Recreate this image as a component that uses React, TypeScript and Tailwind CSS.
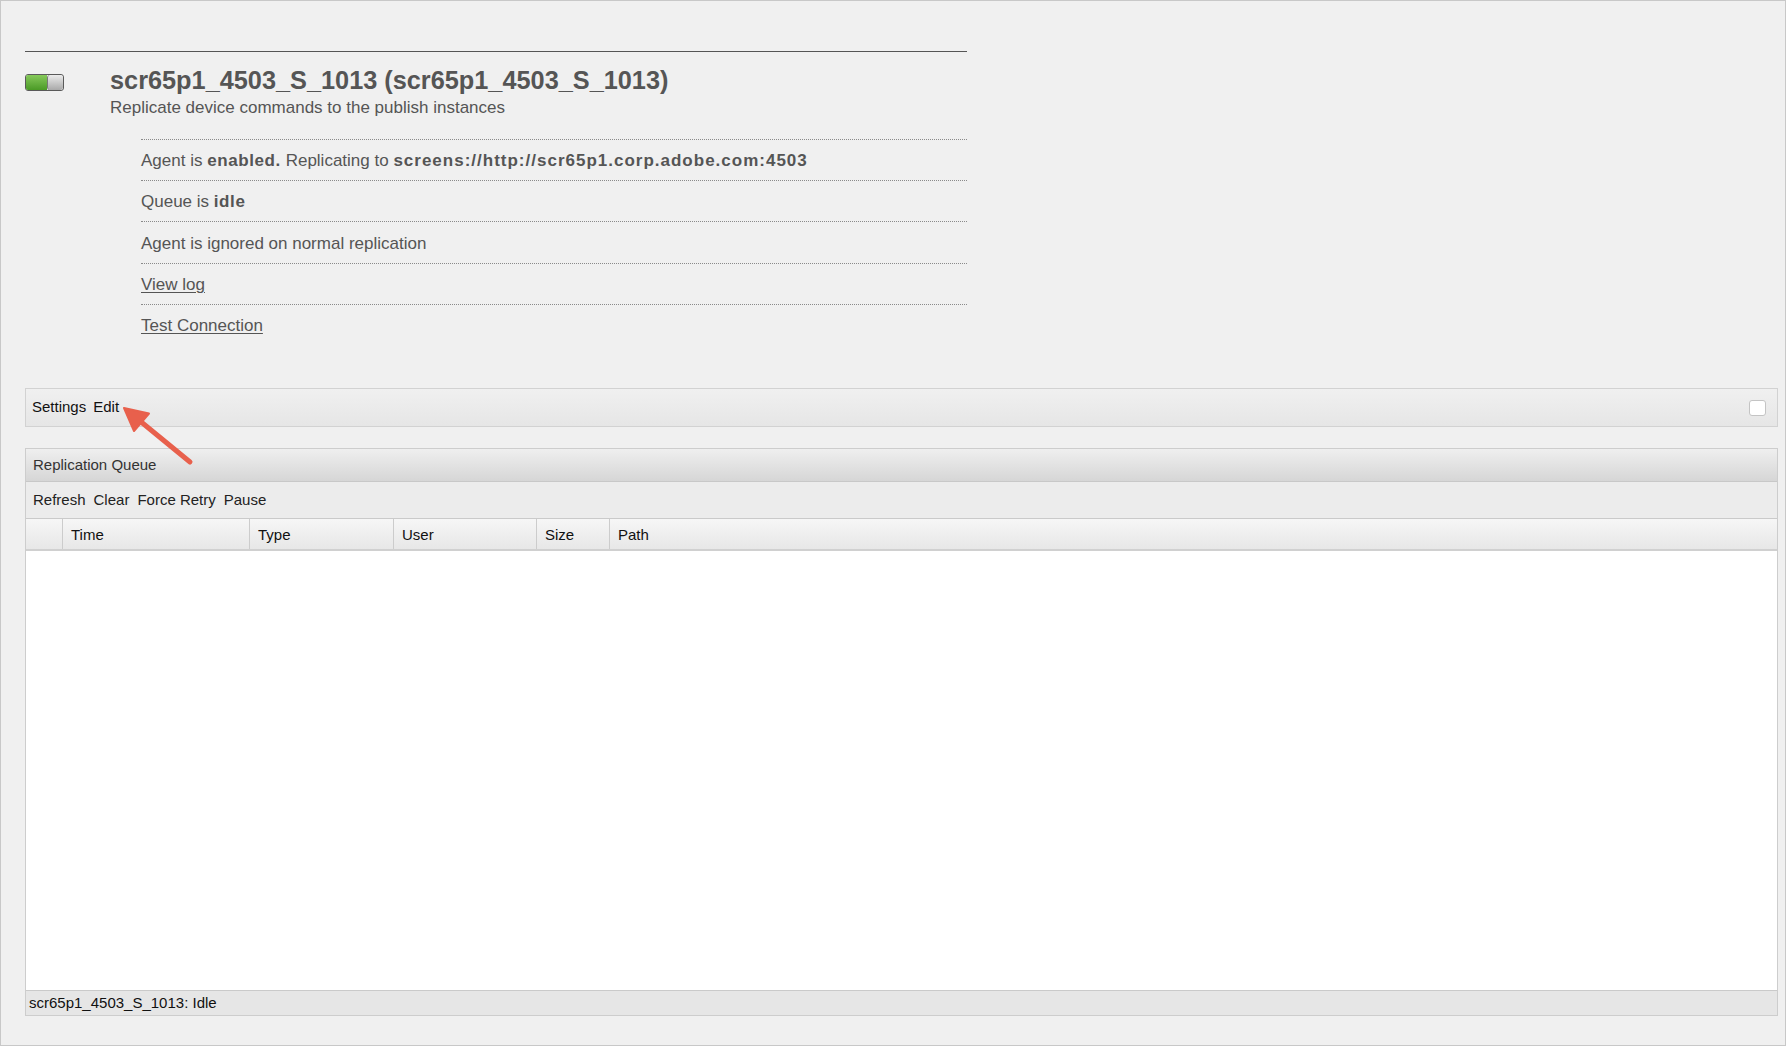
import React from 'react'

const font = { fontFamily: '"Liberation Sans", Arial, sans-serif' }

function Toggle() {
  return (
    <div className="flex w-[39px] h-[17px] rounded-[3px] border border-[#5a5a5a] overflow-hidden">
      <div className="w-[21px] bg-gradient-to-b from-[#86c95a] to-[#4a9a25]" />
      <div className="flex-1 rounded-[3px] border-l border-[#777] bg-gradient-to-b from-[#ececec] to-[#a9a9a9]" />
    </div>
  )
}

function Arrow() {
  return (
    <svg
      className="absolute left-[115px] top-[399px] pointer-events-none"
      width="80"
      height="70"
      viewBox="0 0 80 70"
    >
      <line x1="24" y1="21" x2="74" y2="62" stroke="#e8604c" strokeWidth="5" strokeLinecap="round" />
      <polygon points="8,8 33,13.5 18,31" fill="#e8604c" stroke="#e8604c" strokeWidth="2" strokeLinejoin="round" />
    </svg>
  )
}

export default function App() {
  const rows = [
    {
      h: 'h-[41px]',
      node: (
        <>
          Agent is <b className="tracking-[0.6px]">enabled.</b> Replicating to{' '}
          <b className="tracking-[1px]">screens://http://scr65p1.corp.adobe.com:4503</b>
        </>
      ),
    },
    {
      h: 'h-[41px]',
      node: (
        <>
          Queue is <b className="tracking-[0.6px]">idle</b>
        </>
      ),
    },
    { h: 'h-[42px]', node: <>Agent is ignored on normal replication</> },
    { h: 'h-[41px]', node: <span className="underline underline-offset-2">View log</span> },
    { h: 'h-[41px]', node: <span className="underline underline-offset-2">Test Connection</span> },
  ]

  const columns = [
    { label: '', w: 'w-[37px]' },
    { label: 'Time', w: 'w-[187px]' },
    { label: 'Type', w: 'w-[144px]' },
    { label: 'User', w: 'w-[143px]' },
    { label: 'Size', w: 'w-[73px]' },
  ]

  return (
    <div
      className="relative box-border w-[1786px] h-[1046px] border border-[#c8c8c8] bg-[#f0f0f0] flex flex-col"
      style={font}
    >
      {/* agent summary */}
      <div className="pt-[50px] pl-[24px] w-[966px]">
        <div className="h-px bg-[#555]" />
        <div className="flex mt-[13px]">
          <div className="w-[85px] pt-[9px]">
            <Toggle />
          </div>
          <div>
            <div className="text-[25.3px] leading-[30px] font-bold text-[#555]">
              scr65p1_4503_S_1013 (scr65p1_4503_S_1013)
            </div>
            <div className="mt-[2px] text-[17px] leading-[22px] text-[#555]">
              Replicate device commands to the publish instances
            </div>
          </div>
        </div>
        <div className="ml-[116px] mt-[20px]">
          {rows.map((r, i) => (
            <div
              key={i}
              className={`${r.h} border-t border-dotted border-[#8a8a8a] flex items-center pt-[2px] text-[17px] text-[#555]`}
            >
              <div>{r.node}</div>
            </div>
          ))}
        </div>
      </div>

      {/* settings bar */}
      <div className="ml-[24px] mr-[7px] mt-[43px] h-[39px] border border-[#d2d2d2] bg-gradient-to-b from-[#f0f0f0] to-[#e6e6e6] flex items-center pl-[6px] pr-[11px] text-[15px] text-[#111]">
        <span>Settings</span>
        <span className="ml-[7px]">Edit</span>
        <div className="ml-auto w-[17px] h-[16px] rounded-[3px] border border-[#c4c4c4] bg-white" />
      </div>

      {/* replication queue */}
      <div className="ml-[24px] mr-[7px] mt-[21px] h-[568px] border border-[#cdcdcd] flex flex-col text-[15px]">
        <div className="h-[33px] shrink-0 border-b border-[#c8c8c8] bg-gradient-to-b from-[#efefef] to-[#d6d6d6] flex items-center pl-[7px] text-[#333]">
          Replication Queue
        </div>
        <div className="h-[37px] shrink-0 border-b border-[#cacaca] bg-[#ececec] flex items-center gap-[8px] pl-[7px] text-[#222]">
          <span>Refresh</span>
          <span>Clear</span>
          <span>Force Retry</span>
          <span>Pause</span>
        </div>
        <div className="h-[32px] shrink-0 border-b-2 border-[#d0d0d0] bg-gradient-to-b from-[#f6f6f6] to-[#e7e7e7] flex text-[#111]">
          {columns.map((c, i) => (
            <div key={i} className={`${c.w} shrink-0 border-r border-[#cccccc] flex items-center pl-[8px] pt-[2px]`}>
              {c.label}
            </div>
          ))}
          <div className="flex-1 flex items-center pl-[8px] pt-[2px]">Path</div>
        </div>
        <div className="flex-1 bg-white" />
        <div className="h-[25px] shrink-0 border-t border-[#cacaca] bg-[#e6e6e6] flex items-center pl-[3px] text-[#111]">
          scr65p1_4503_S_1013: Idle
        </div>
      </div>

      <Arrow />
    </div>
  )
}
